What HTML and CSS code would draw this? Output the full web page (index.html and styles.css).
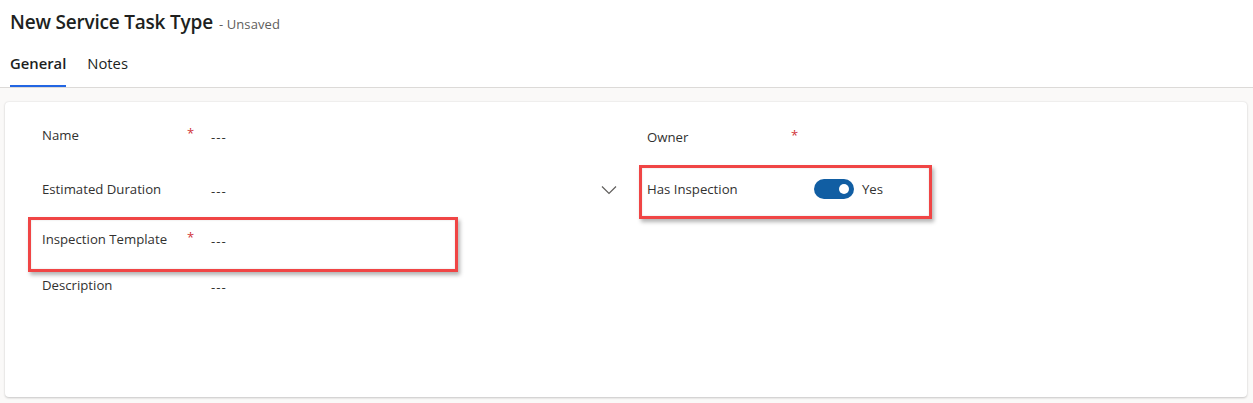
FILE: index.html
```html
<!DOCTYPE html>
<html>
<head>
<meta charset="utf-8">
<link rel="stylesheet" href="styles.css">
</head>
<body>
<header class="header">
  <div class="title-row">
    <h1 class="title">New Service Task Type</h1>
    <span class="status">- Unsaved</span>
  </div>
  <nav class="tabs">
    <span class="tab active">General</span>
    <span class="tab">Notes</span>
  </nav>
</header>
<main class="content">
  <section class="card">
    <div class="col left">
      <div class="field r1">
        <span class="label">Name</span><span class="req">*</span><span class="value">---</span>
      </div>
      <div class="field r2">
        <span class="label">Estimated Duration</span><span class="req"></span><span class="value">---</span>
        <svg class="chev" width="16" height="10" viewBox="0 0 16 10"><path d="M1 1.5 L8 8.5 L15 1.5" fill="none" stroke="#605e5c" stroke-width="1.2"/></svg>
      </div>
      <div class="field r3">
        <span class="label">Inspection Template</span><span class="req">*</span><span class="value">---</span>
        <div class="highlight hl-left"></div>
      </div>
      <div class="field r4">
        <span class="label">Description</span><span class="req"></span><span class="value">---</span>
      </div>
    </div>
    <div class="col right">
      <div class="field r1b">
        <span class="label">Owner</span><span class="req">*</span><span class="value"></span>
      </div>
      <div class="field r2b">
        <span class="label">Has Inspection</span><span class="req"></span>
        <span class="toggle"><span class="knob"></span></span><span class="yes">Yes</span>
        <div class="highlight hl-right"></div>
      </div>
    </div>
  </section>
</main>
</body>
</html>
```
FILE: styles.css
```css
* { box-sizing: border-box; }
html, body { margin: 0; padding: 0; }
body {
  width: 1253px;
  height: 403px;
  overflow: hidden;
  background: #faf9f8;
  font-family: "Segoe UI", "Open Sans", "Noto Sans", sans-serif;
  color: #323130;
}
.header {
  background: #fff;
  height: 88px;
  border-bottom: 1px solid #dcdad8;
  padding-left: 10px;
}
.title-row {
  display: flex;
  align-items: baseline;
  gap: 6px;
  height: 44px;
  padding-top: 9px;
}
.title {
  margin: 0;
  font-size: 19px;
  font-weight: 600;
  color: #201f1e;
  letter-spacing: -0.2px;
}
.status {
  font-size: 13px;
  color: #605e5c;
  letter-spacing: 0.1px;
}
.tabs {
  display: flex;
  gap: 21px;
  height: 43px;
}
.tab {
  font-size: 14.8px;
  color: #201f1e;
  padding-top: 9px;
  height: 43px;
}
.tab.active {
  font-weight: 600;
  border-bottom: 2px solid #2266e3;
}
.content {
  padding: 14px 6px 0 5px;
}
.card {
  background: #fff;
  border-radius: 4px;
  box-shadow: 0 0.5px 2px rgba(0,0,0,0.14), 0 1px 3px rgba(0,0,0,0.08);
  height: 295px;
  display: grid;
  grid-template-columns: 605px 1fr;
  padding: 24px 0 0 37px;
}
.col { display: flex; flex-direction: column; }
.field {
  position: relative;
  display: flex;
  align-items: flex-start;
  font-size: 13.2px;
  line-height: 18px;
}
.label { width: 145px; }
.req { width: 24px; color: #d13438; font-size: 13px; line-height: 14px; }
.value { color: #323130; padding-top: 2px; letter-spacing: 1px; }
.r1 { height: 54px; }
.r2 { height: 50px; }
.r3 { height: 46px; }
.r4 { height: 40px; }
.r1b { height: 52px; margin-top: 2px; }
.r2b { height: 40px; }
.right .label { width: 144px; }
.right .req { width: 23px; }
.chev { position: absolute; left: 559px; top: 5px; }
.toggle {
  width: 40px;
  height: 20px;
  border-radius: 10px;
  background: #115ea3;
  position: relative;
  margin-top: -1px;
}
.knob {
  position: absolute;
  right: 5px;
  top: 5px;
  width: 10px;
  height: 10px;
  border-radius: 50%;
  background: #fff;
}
.yes { margin-left: 8px; }
.highlight {
  position: absolute;
  border: 3px solid #f04545;
  box-shadow: 2px 3px 4px rgba(0,0,0,0.3), inset 0 0 2px rgba(0,0,0,0.15);
  pointer-events: none;
}
.hl-left { left: -14px; top: -13px; width: 430px; height: 55px; }
.hl-right { left: -8px; top: -15px; width: 293px; height: 54px; }
```
